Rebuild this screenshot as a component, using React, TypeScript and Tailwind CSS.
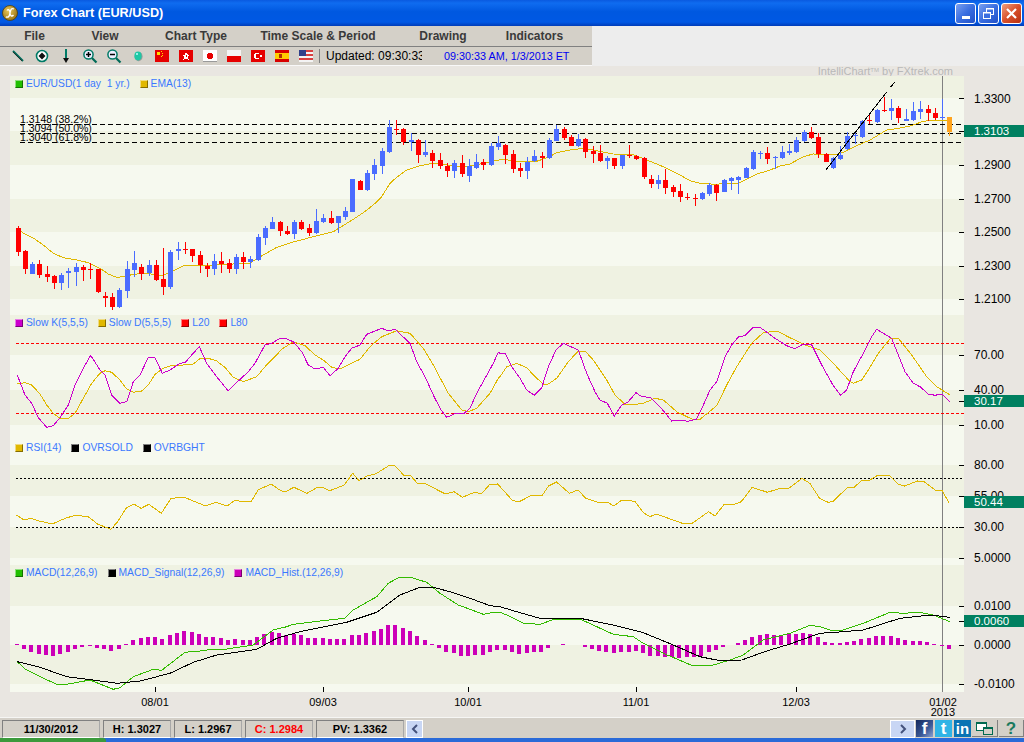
import React from "react";

type P = [number, number][];
const z = (l: P, ox: number, oy: number, sx = 3, sy = 3) =>
  l.map(([x, y]) => `${(ox + x / sx).toFixed(1)},${(oy + y / sy).toFixed(1)}`).join(" ");

const C: [number, number, number, number, number][] = [
  [378,384,455,468,0],[450,453,507,522,0],[486,492,522,522,1],[480,492,525,534,0],[498,522,531,546,0],[525,528,549,567,0],[519,525,549,570,1],[504,514,519,564,1],[489,501,516,558,1],[495,501,510,543,0],
  [489,507,510,537,0],[507,507,576,579,0],[576,588,593,621,0],[579,591,621,630,0],[564,570,621,624,1],[483,507,573,594,1],[453,489,510,531,1],[492,501,522,540,0],[480,495,519,528,1],[480,495,540,543,0],
  [444,537,561,585,0],[450,456,561,567,1],[426,447,453,480,1],[426,447,450,462,0],[447,447,468,486,0],[453,465,495,519,0],[489,498,507,531,0],[462,483,507,525,1],[456,483,492,519,0],[477,489,507,519,0],
  [462,471,507,522,1],[456,471,486,507,0],[468,477,486,504,1],[402,411,480,483,1],[378,384,414,435,1],[351,366,387,387,1],[363,366,393,408,0],[378,393,402,405,0],[360,366,402,417,1],[360,366,387,390,0],
  [372,384,399,408,0],[327,363,399,402,1],[342,354,366,369,1],[333,354,369,372,0],[348,348,369,399,1],
  [321,333,351,360,1],[237,237,336,336,1],[240,243,270,270,0],[210,219,270,273,1],[177,195,222,240,1],[144,153,198,222,1],[60,81,156,159,1],[60,87,90,105,0],[84,87,126,135,0],[100,120,126,153,1],
  [117,120,165,189,0],[120,156,165,171,1],[150,159,183,204,0],[159,180,198,207,0],[189,198,213,231,0],[180,189,213,234,1],[165,189,222,231,0],[177,198,228,246,1],[162,186,204,207,1],[177,186,195,210,0],
  [129,138,195,198,1],[108,129,141,150,1],[132,135,165,192,0],[150,162,207,219,0],[189,204,213,231,0],[171,186,213,237,1],[150,168,183,186,1],[156,168,174,204,0],[114,120,174,177,1],[75,87,123,123,1],
  [81,87,114,120,0],[105,111,138,138,0],[102,117,138,141,1],[114,117,156,174,0],[138,153,162,189,0],[135,159,183,186,0],[168,174,183,207,1],[174,174,198,207,0],[165,165,198,207,1],[135,165,168,174,0],
  [165,168,177,180,0],[171,174,231,237,0],[225,237,252,264,0],[225,240,252,267,1],[207,240,264,282,0],[255,261,276,291,0],[252,273,291,306,0],
];
const C2: [number, number, number, number, number][] = [
  [339,351,354,360,0],[342,354,357,378,0],[336,339,357,360,1],[309,315,342,348,1],[312,315,339,363,0],[297,300,336,336,1],[291,295,303,330,1],[288,291,300,342,1],[261,264,294,294,1],[210,216,267,270,1],
  [213,219,222,237,1],[201,219,237,252,0],[228,231,234,267,1],[198,216,234,237,1],[192,213,219,225,1],[171,180,216,219,1],[150,156,183,186,1],[141,156,174,177,0],[159,171,222,234,0],[219,222,246,246,0],
  [231,234,264,267,1],[198,225,237,240,1],[156,168,207,210,1],[156,165,168,192,1],[120,123,171,174,1],[105,120,123,132,0],[87,90,126,129,1],[51,90,93,96,0],[57,84,93,120,1],[78,84,114,129,0],
  [87,117,123,123,1],[66,93,120,123,1],[63,87,96,117,1],[75,87,99,123,0],[84,99,114,120,0],[57,111,114,120,1],[111,111,156,168,2],
];
const candles = [...C.map((c) => ({ c, oy: 100 })), ...C2.map((c) => ({ c, oy: 80 }))].map(({ c, oy }, i) => ({
  x: Math.round(17.5 + 7.28 * i),
  wt: Math.round(oy + c[0] / 3), bt: Math.round(oy + c[1] / 3), bb: Math.round(oy + c[2] / 3), wb: Math.round(oy + c[3] / 3),
  fill: ["#ff0000", "#4a6cff", "#ffa41e"][c[4]],
}));

const ema = [
  z([[52,384],[70,400],[100,414],[130,435],[160,460],[190,473],[232,480],[265,488],[300,505],[325,522],[350,532],[372,530],[400,523],[440,520],[487,527],[515,515],[550,498],[575,495],[650,495],[750,489],[790,465],[830,442],[880,426],[940,410],[1000,395]], 0, 100),
  z([[40,358],[70,338],[100,315],[125,290],[150,250],[170,232],[200,210],[240,197],[280,190],[320,195],[360,200],[400,197],[450,185],[490,178],[530,184],[590,184],[625,172],[650,158],[690,150],[720,146],[760,150],[820,162],[880,164],[920,180],[970,200],[1020,225]], 340, 100),
  z([[0,285],[30,302],[60,310],[105,313],[150,310],[175,310],[200,298],[230,282],[265,272],[300,258],[330,252],[370,230],[400,222],[470,225],[500,212],[530,197],[570,180],[620,150],[650,146],[690,138],[730,124],[770,120],[800,123]], 680, 80),
].join(" ");

const kLine = [
  z([[52,180],[75,240],[95,265],[115,308],[140,337],[160,332],[180,308],[205,270],[225,210],[250,160],[272,121],[300,165],[315,180],[335,240],[360,265],[380,260],[400,200],[420,180],[445,127],[465,128],[487,175],[510,165],[540,145],[555,143],[575,120],[598,95],[620,145],[650,185],[685,228],[715,198],[745,170],[765,145],[795,90],[815,85],[840,70],[860,72],[880,80],[905,110],[925,150],[945,162],[970,157],[990,182],[1015,160],[1035,125],[1055,100],[1080,90],[1100,58],[1120,50],[1145,40],[1165,48],[1185,43],[1230,85],[1250,140],[1275,185],[1300,240],[1320,280],[1340,307],[1365,296],[1390,297],[1410,280],[1430,235],[1455,190],[1480,145],[1495,112]], 0, 315),
  z([[0,115],[15,115],[35,155],[60,190],[80,225],[103,241],[125,218],[145,155],[168,105],[190,85],[235,105],[260,175],[285,230],[300,255],[322,265],[343,303],[365,270],[385,260],[408,233],[425,245],[450,247],[480,275],[515,318],[540,316],[565,319],[590,312],[610,270],[630,225],[650,200],[675,125],[695,90],[715,66],[735,62],[760,37],[780,37],[825,70],[860,92],[885,101],[910,87],[935,90],[965,150],[1000,212],[1022,241],[1040,225],[1060,170],[1090,115],[1115,65],[1130,43],[1175,70],[1195,120],[1215,170],[1240,205],[1260,215],[1285,237],[1305,241],[1325,237],[1350,260]], 500, 315),
].join(" ");
const dLine = [
  z([[52,207],[75,203],[95,210],[120,237],[140,270],[160,295],[180,310],[205,310],[225,295],[250,250],[275,205],[300,175],[315,167],[335,172],[360,195],[380,222],[400,232],[425,228],[445,210],[465,178],[490,160],[520,150],[550,150],[580,147],[600,131],[625,130],[650,138],[675,157],[700,187],[730,200],[770,185],[795,155],[825,125],[845,103],[880,80],[915,92],[945,120],[970,135],[995,157],[1020,162],[1050,147],[1080,133],[1110,95],[1145,65],[1190,47],[1230,55],[1270,100],[1300,150],[1345,235],[1385,285],[1405,290],[1430,280],[1470,235],[1495,190]], 0, 315),
  z([[0,185],[20,155],[50,145],[80,158],[105,185],[130,207],[145,207],[170,190],[205,140],[235,108],[255,108],[280,135],[320,195],[345,240],[375,268],[390,270],[430,265],[465,250],[490,255],[530,290],[575,312],[600,313],[650,272],[680,210],[710,155],[755,85],[790,53],[830,48],[870,68],[910,88],[960,105],[1000,145],[1050,200],[1060,205],[1085,195],[1105,165],[1135,115],[1170,72],[1195,70],[1235,120],[1280,185],[1310,215],[1350,240]], 500, 315),
].join(" ");

const rsi = z([[25,225],[37,240],[48,235],[60,243],[80,252],[100,235],[115,226],[135,230],[150,253],[170,268],[180,245],[193,205],[205,192],[216,205],[228,193],[247,220],[262,175],[282,172],[315,198],[330,187],[348,198],[360,180],[372,186],[385,184],[395,150],[415,132],[430,152],[437,155],[450,142],[470,160],[485,143],[495,143],[505,152],[527,135],[540,100],[550,122],[562,108],[575,102],[597,75],[605,78],[618,105],[628,105],[640,132],[650,130],[682,162],[695,155],[708,172],[725,158],[738,160],[750,133],[762,132],[785,182],[795,185],[815,165],[830,167],[840,138],[852,126],[872,160],[885,150],[897,175],[918,188],[930,186],[940,198],[952,180],[972,184],[985,218],[995,230],[1005,222],[1045,250],[1060,250],[1085,215],[1095,228],[1108,195],[1125,193],[1135,185],[1152,142],[1175,157],[1195,145],[1208,145],[1228,115],[1240,130],[1255,175],[1268,187],[1275,185],[1298,142],[1308,142],[1320,120],[1332,120],[1342,108],[1362,106],[1375,132],[1385,138],[1405,123],[1415,125],[1432,150],[1442,150],[1453,187]], 0, 440, 1.53125, 3);

const mGreen = [
  z([[52,290],[75,312],[120,335],[175,360],[200,358],[270,345],[340,373],[360,368],[400,335],[460,313],[485,316],[555,262],[610,257],[640,252],[680,252],[760,240],[820,195],[860,185],[880,178],[960,168],[1035,160],[1060,135],[1130,95],[1165,55],[1195,38],[1235,38],[1280,52],[1320,85],[1375,120],[1410,133],[1450,148],[1480,142]], 0, 565),
  z([[0,142],[20,150],[70,175],[120,178],[165,162],[240,162],[340,208],[400,215],[430,235],[490,265],[580,303],[640,300],[690,285],[730,270],[790,225],[870,205],[930,181],[960,185],[1000,198],[1030,195],[1090,175],[1170,142],[1210,145],[1260,142],[1300,150],[1350,170]], 500, 565),
].join(" ");
const mBlack = [
  z([[52,290],[120,307],[200,335],[280,345],[350,355],[420,348],[510,325],[580,292],[650,270],[770,253],[830,220],[900,200],[970,186],[1040,172],[1130,142],[1200,90],[1260,67],[1300,67],[1350,80],[1410,100],[1470,122]], 0, 565),
  z([[0,125],[60,143],[120,160],[240,160],[340,180],[430,203],[520,240],[600,275],[660,287],[725,285],[800,258],[870,237],[960,205],[1030,200],[1090,195],[1200,160],[1290,150],[1350,157]], 500, 565),
].join(" ");

const H1: P = [[52,3],[72,-12],[93,-21],[117,-27],[138,-30],[159,-33],[180,-27],[204,-21],[225,-12],[246,-6],[270,-4],[291,-9],[312,-12],[333,-18],[357,-12],[378,3],[399,15],[423,22],[444,24],[465,24],[486,18],[510,30],[531,36],[552,41],[576,39],[597,33],[618,24],[639,24],[663,21],[684,15],[705,18],[729,15],[750,15],[771,24],[792,33],[816,39],[837,36],[858,31],[882,33],[903,30],[924,21],[945,21],[969,21],[990,18],[1011,18],[1032,18],[1056,30],[1077,30],[1098,36],[1122,42],[1143,48],[1164,60],[1185,60],[1209,51],[1230,42],[1251,27],[1275,15],[1296,3],[1317,-9],[1338,-21],[1362,-24],[1383,-33],[1404,-33],[1425,-30],[1449,-30],[1470,-21],[1491,-15]];
const H2: P = [[15,-15],[36,-21],[57,-27],[81,-23],[102,-21],[123,-21],[144,-9],[189,3],[255,-6],[276,-12],[297,-18],[318,-21],[342,-23],[363,-21],[387,-21],[408,-18],[429,-24],[450,-33],[474,-33],[495,-36],[516,-36],[537,-39],[561,-36],[582,-36],[603,-33],[627,-21],[648,-15],[669,-6],[714,6],[735,15],[756,24],[780,30],[801,33],[822,30],[843,30],[867,33],[888,33],[909,36],[930,33],[954,24],[975,9],[996,6],[1020,6],[1041,9],[1062,12],[1083,18],[1107,21],[1128,27],[1149,27],[1173,27],[1194,21],[1215,15],[1239,12],[1260,12],[1281,9],[1302,3],[1326,-3],[1347,-12]];
const hist = [...H1.map(([x, v]) => ({ x: x / 3, v })), ...H2.map(([x, v]) => ({ x: 500 + x / 3, v }))];

const dark = "bg-[#eff2e2]";
const light = "bg-[#f6f9ef]";
const txt = "font-['Liberation_Sans',Arial,sans-serif]";

function Swatch({ c }: { c: string }) {
  return <span className={`block h-[8px] w-[8px] border border-t-white/50 border-l-white/50 border-r-black/40 border-b-black/40 ${c}`} />;
}
function Legend({ items }: { items: [string, string][] }) {
  return (
    <div className="absolute left-[5px] top-[1px] z-10 flex h-[13px] items-center gap-[10px]">
      {items.map(([c, t]) => (
        <div key={t} className="flex items-center gap-[3px]">
          <Swatch c={c} />
          <span className="whitespace-pre text-[10.3px] leading-[13px] text-[#3a78ff]">{t}</span>
        </div>
      ))}
    </div>
  );
}
function AxisLabel({ top, t }: { top: string; t: string }) {
  return <div className={`absolute left-[10px] h-[14px] text-[12px] leading-[14px] text-black ${top}`}>{t}</div>;
}
function Box({ top, t }: { top: string; t: string }) {
  return <div className={`absolute left-0 h-[12px] w-[60px] bg-[#008060] pl-[10px] text-[11.5px] leading-[12px] text-white ${top}`}>{t}</div>;
}
function Overlay({ top, h, ticks, children }: { top: number; h: number; ticks: number[]; children: React.ReactNode }) {
  return (
    <svg className="absolute inset-0 h-full w-full" viewBox={`10 ${top} 954 ${h}`} shapeRendering="crispEdges" fill="none">
      <line x1={942.5} x2={942.5} y1={top} y2={top + h} stroke="#808080" />
      {children}
      {ticks.map((y) => (
        <line key={y} x1={959} x2={964} y1={y + 0.5} y2={y + 0.5} stroke="#000" />
      ))}
    </svg>
  );
}

function Flag({ children }: { children: React.ReactNode }) {
  return (
    <svg width="14" height="12" viewBox="0 0 14 12" shapeRendering="crispEdges">
      {children}
    </svg>
  );
}
const tools: React.ReactNode[] = [
  <svg key="a" width="16" height="16" viewBox="0 0 16 16"><path d="M3 3L13 13" stroke="#006a58" strokeWidth="2" /><path d="M3 4L12 13" stroke="#222" strokeWidth="0.8" /></svg>,
  <svg key="b" width="16" height="16" viewBox="0 0 16 16"><circle cx="8" cy="8" r="5.5" fill="#fff" stroke="#007a66" strokeWidth="1.6" /><path d="M8 4.5L11.5 8L8 11.5L4.5 8Z" fill="#111" /></svg>,
  <svg key="c" width="16" height="16" viewBox="0 0 16 16"><rect x="7" y="1" width="2" height="10" fill="#007a66" /><path d="M5 10H11L8 15Z" fill="#111" /></svg>,
  <svg key="d" width="16" height="16" viewBox="0 0 16 16"><circle cx="6.5" cy="6.5" r="4.6" fill="#eef" stroke="#007a66" strokeWidth="1.5" /><path d="M4 6.5H9M6.5 4V9" stroke="#000" strokeWidth="1.5" /><path d="M10 10L14.5 14.5" stroke="#006a58" strokeWidth="2.2" /></svg>,
  <svg key="e" width="16" height="16" viewBox="0 0 16 16"><circle cx="6.5" cy="6.5" r="4.6" fill="#eef" stroke="#007a66" strokeWidth="1.5" /><path d="M4 6.5H9" stroke="#000" strokeWidth="1.5" /><path d="M10 10L14.5 14.5" stroke="#006a58" strokeWidth="2.2" /></svg>,
  <svg key="f" width="16" height="16" viewBox="0 0 16 16"><ellipse cx="8.6" cy="8.6" rx="4" ry="4.6" fill="#999" /><ellipse cx="8" cy="8" rx="3.6" ry="4.4" fill="#1ec8a4" /><circle cx="7" cy="6" r="1" fill="#bff" /></svg>,
  <Flag key="cn"><rect width="14" height="12" fill="#e60000" /><rect x="2" y="2" width="3" height="3" fill="#ffdd00" /><rect x="6" y="1" width="1" height="1" fill="#ffdd00" /><rect x="7" y="3" width="1" height="1" fill="#ffdd00" /><rect x="7" y="5" width="1" height="1" fill="#ffdd00" /><rect x="6" y="6" width="1" height="1" fill="#ffdd00" /></Flag>,
  <Flag key="hk"><rect width="14" height="12" fill="#e60000" /><path d="M7 2.5L8.5 4.5L10.5 5L9 7L9.5 9.5L7 8.5L4.5 9.5L5 7L3.5 5L5.5 4.5Z" fill="#fff" /><rect x="6.5" y="5" width="1" height="2" fill="#e60000" /></Flag>,
  <Flag key="jp"><rect width="14" height="12" fill="#fff" /><rect y="11" width="14" height="1" fill="#999" /><circle cx="7" cy="6" r="3" fill="#e60000" /></Flag>,
  <Flag key="pl"><rect width="14" height="6" fill="#f4f4f4" /><rect y="6" width="14" height="6" fill="#e60000" /></Flag>,
  <Flag key="tr"><rect width="14" height="12" fill="#e60000" /><circle cx="6" cy="6" r="3" fill="#fff" /><circle cx="7" cy="6" r="2.3" fill="#e60000" /><rect x="9" y="5" width="2" height="2" fill="#fff" /></Flag>,
  <Flag key="es"><rect width="14" height="12" fill="#d80000" /><rect y="3" width="14" height="6" fill="#ffcc00" /><rect x="4" y="4" width="3" height="4" fill="#b03000" /></Flag>,
  <Flag key="us"><rect width="14" height="12" fill="#f4f4f4" /><rect width="14" height="2" fill="#d84040" /><rect y="4" width="14" height="2" fill="#d84040" /><rect y="8" width="14" height="2" fill="#d84040" /><rect width="7" height="6" fill="#30408a" /></Flag>,
];

function WinBtn({ red, children }: { red?: boolean; children: React.ReactNode }) {
  return (
    <button className={`flex h-[21px] w-[21px] items-center justify-center rounded-[3px] border border-white ${red ? "bg-[linear-gradient(135deg,#f0a080,#d8502a_50%,#b83010)]" : "bg-[linear-gradient(135deg,#7aa0f0,#3a6ee0_50%,#2050c8)]"}`}>
      {children}
    </button>
  );
}
function Cell({ w, red, t }: { w: string; red?: boolean; t: string }) {
  return (
    <div className={`flex h-[18px] items-center justify-center border border-t-[#808080] border-l-[#808080] border-r-[#a8a8a8] border-b-white bg-[#d4d0c8] text-[11px] font-bold ${w} ${red ? "text-[#ff0000]" : "text-black"}`}>
      {t}
    </div>
  );
}
function Scroll({ w, dir }: { w: string; dir: "l" | "r" }) {
  return (
    <button className={`flex h-[18px] items-center justify-center border border-white bg-[#c8d6f4] ${w}`}>
      <svg width="8" height="10" viewBox="0 0 8 10"><path d={dir === "l" ? "M6 1L2 5L6 9" : "M2 1L6 5L2 9"} stroke="#44527c" strokeWidth="2" fill="none" /></svg>
    </button>
  );
}
function DateLabel({ left, t }: { left: string; t: string }) {
  return <div className={`absolute top-[3px] h-[14px] -translate-x-1/2 text-[11px] leading-[14px] text-black ${left}`}>{t}</div>;
}

export default function App() {
  return (
    <div className={`flex h-[742px] w-[1024px] flex-col overflow-hidden bg-[#e9e6e1] ${txt}`}>
      {/* title bar */}
      <div className="flex h-[26px] shrink-0 items-center bg-[linear-gradient(180deg,#0a5ae0_0%,#0f6cf0_12%,#0058e0_45%,#0058e4_85%,#003cb8_100%)] pl-[2px] pr-[2px]">
        <svg width="16" height="16" viewBox="0 0 16 16">
          <defs>
            <radialGradient id="g" cx="0.4" cy="0.35" r="0.8"><stop offset="0" stopColor="#e8c85a" /><stop offset="1" stopColor="#8a6408" /></radialGradient>
          </defs>
          <circle cx="8" cy="8" r="7.5" fill="url(#g)" stroke="#4a3c10" strokeWidth="0.8" />
          <path d="M12 4C9 2.6 8.6 5 8 8C7.4 11 6.6 13 3.8 11.8M5 5.5C6 4 8 4.5 8 8C8 11 10 11.8 11.5 10" stroke="#fff" strokeWidth="1.3" fill="none" />
        </svg>
        <span className="ml-[5px] text-[12.7px] font-bold leading-[26px] text-white">Forex Chart (EUR/USD)</span>
        <div className="ml-auto flex gap-[2px]">
          <WinBtn><span className="mt-[9px] block h-[3px] w-[8px] bg-white" /></WinBtn>
          <WinBtn>
            <svg width="13" height="13" viewBox="0 0 13 13" fill="none" stroke="#fff"><rect x="4.5" y="1.5" width="7" height="6" /><rect x="1.5" y="5.5" width="7" height="6" fill="#3a6ee0" /><path d="M4.5 2H11.5M1.5 6H8.5" /></svg>
          </WinBtn>
          <WinBtn red>
            <svg width="13" height="13" viewBox="0 0 13 13"><path d="M2 2L11 11M11 2L2 11" stroke="#fff" strokeWidth="2.2" /></svg>
          </WinBtn>
        </div>
      </div>

      {/* menu + toolbar */}
      <div className="flex h-[40px] shrink-0 bg-[#ededed]">
        <div className="flex w-[592px] flex-col bg-[#d4d0c8]">
          <div className="flex h-[21px] items-center border-b border-[#808080] text-[12px] font-bold text-[#3a3a3a]">
            {([["w-[69px]", "File"], ["w-[72px]", "View"], ["w-[110px]", "Chart Type"], ["w-[134px]", "Time Scale & Period"], ["w-[116px]", "Drawing"], ["w-[67px]", "Indicators"]] as const).map(([w, t]) => (
              <div key={t} className={`text-center ${w}`}>{t}</div>
            ))}
          </div>
          <div className="flex h-[18px] items-center pl-[6px]">
            {tools.map((t, i) => (
              <div key={i} className="flex w-[24px] items-center justify-center">{t}</div>
            ))}
            <div className="ml-[1px] h-[14px] w-px bg-[#808080]" />
            <div className="ml-[6px] w-[96px] overflow-hidden whitespace-nowrap text-[12px] leading-[14px] text-black">Updated: 09:30:33</div>
            <div className="ml-[22px] whitespace-nowrap text-[10.8px] text-[#0000f0]">09:30:33 AM, 1/3/2013 ET</div>
          </div>
          <div className="h-[1px] bg-[#f8f8f8]" />
        </div>
      </div>

      {/* watermark */}
      <div className="flex h-[10px] shrink-0 justify-end pr-[71px] text-[11px] leading-[10px] text-[#b8b8b8]">
        <span className="whitespace-nowrap">IntelliChart<sup className="text-[6px]">TM</sup> by FXtrek.com</span>
      </div>

      {/* chart panels */}
      <div className="flex shrink-0 flex-col pl-[10px]">
        {/* main */}
        <div className="flex h-[239px]">
          <div className="relative w-[954px]">
            {["h-[22px] " + dark, "h-[33px] " + light, "h-[34px] " + dark, "h-[34px] " + light, "h-[33px] " + dark, "h-[34px] " + light, "h-[33px] " + dark, "h-[16px] " + light].map((b, i) => (
              <div key={i} className={b} />
            ))}
            <Overlay top={76} h={239} ticks={[98, 131, 165, 199, 232, 266, 299]}>
              {[124.5, 133.5, 142.5].map((y) => (
                <line key={y} x1={20} x2={964} y1={y} y2={y} stroke="#000" strokeDasharray="5 3" />
              ))}
              <polyline points={ema} stroke="#e0b800" />
              {candles.map((k, i) => (
                <g key={i}>
                  <rect x={k.x} y={k.wt} width={1} height={Math.max(1, k.wb - k.wt)} fill={k.fill} />
                  <rect x={k.x - 2} y={k.bt} width={5} height={Math.max(1, k.bb - k.bt)} fill={k.fill} />
                </g>
              ))}
              <polyline points="825.5,170.5 886.7,92" stroke="#000" />
              <polyline points="890.5,87 895,82" stroke="#000" />
            </Overlay>
            <Legend items={[["bg-[#22c000]", "EUR/USD(1 day  1 yr.)"], ["bg-[#e0b800]", "EMA(13)"]]} />
            <div className="absolute left-[10px] top-[38px] text-[10.5px] leading-[11px] text-black">1.3148 (38.2%)</div>
            <div className="absolute left-[10px] top-[47px] text-[10.5px] leading-[11px] text-black">1.3094 (50.0%)</div>
            <div className="absolute left-[10px] top-[56px] text-[10.5px] leading-[11px] text-black">1.3040 (61.8%)</div>
          </div>
          <div className="relative w-[60px]">
            <AxisLabel top="top-[16px]" t="1.3300" />
            <AxisLabel top="top-[82px]" t="1.2900" />
            <AxisLabel top="top-[116px]" t="1.2700" />
            <AxisLabel top="top-[149px]" t="1.2500" />
            <AxisLabel top="top-[183px]" t="1.2300" />
            <AxisLabel top="top-[216px]" t="1.2100" />
            <Box top="top-[49px]" t="1.3103" />
          </div>
        </div>

        {/* stochastic */}
        <div className="flex h-[125px]">
          <div className="relative w-[954px]">
            {["h-[40px] " + dark, "h-[35px] " + light, "h-[35px] " + dark, "h-[15px] " + light].map((b, i) => (
              <div key={i} className={b} />
            ))}
            <Overlay top={315} h={125} ticks={[355, 390, 425, 401]}>
              <line x1={16} x2={964} y1={343.5} y2={343.5} stroke="#ff0000" strokeDasharray="3 2" />
              <line x1={16} x2={964} y1={413.5} y2={413.5} stroke="#ff0000" strokeDasharray="3 2" />
              <polyline points={dLine} stroke="#e0b800" />
              <polyline points={kLine} stroke="#cc00cc" />
            </Overlay>
            <Legend items={[["bg-[#cc00cc]", "Slow K(5,5,5)"], ["bg-[#e0b800]", "Slow D(5,5,5)"], ["bg-[#ff0000]", "L20"], ["bg-[#ff0000]", "L80"]]} />
          </div>
          <div className="relative w-[60px]">
            <AxisLabel top="top-[33px]" t="70.00" />
            <AxisLabel top="top-[68px]" t="40.00" />
            <AxisLabel top="top-[103px]" t="10.00" />
            <Box top="top-[80px]" t="30.17" />
          </div>
        </div>

        {/* RSI */}
        <div className="flex h-[125px]">
          <div className="relative w-[954px]">
            {["h-[25px] " + light, "h-[31px] " + dark, "h-[31px] " + light, "h-[31px] " + dark, "h-[7px] " + light].map((b, i) => (
              <div key={i} className={b} />
            ))}
            <Overlay top={440} h={125} ticks={[465, 496, 527, 558]}>
              <line x1={16} x2={964} y1={478.5} y2={478.5} stroke="#000" strokeDasharray="2 2" />
              <line x1={16} x2={964} y1={527.5} y2={527.5} stroke="#000" strokeDasharray="2 2" />
              <polyline points={rsi} stroke="#e0b800" />
            </Overlay>
            <Legend items={[["bg-[#e0b800]", "RSI(14)"], ["bg-black", "OVRSOLD"], ["bg-black", "OVRBGHT"]]} />
          </div>
          <div className="relative w-[60px]">
            <AxisLabel top="top-[18px]" t="80.00" />
            <AxisLabel top="top-[49px]" t="55.00" />
            <AxisLabel top="top-[80px]" t="30.00" />
            <AxisLabel top="top-[111px]" t="5.0000" />
            <Box top="top-[56px]" t="50.44" />
          </div>
        </div>

        {/* MACD */}
        <div className="flex h-[127px]">
          <div className="relative w-[954px]">
            {["h-[41px] " + dark, "h-[39px] " + light, "h-[39px] " + dark, "h-[8px] " + light].map((b, i) => (
              <div key={i} className={b} />
            ))}
            <Overlay top={565} h={127} ticks={[606, 621, 645, 684]}>
              {hist.map((b, i) => {
                const abs = Math.abs(b.v) / 3;
                return <rect key={i} x={Math.round(b.x) - 2} y={b.v > 0 ? 645 - abs : 645} width={4} height={Math.max(1, abs)} fill="#cc00b8" />;
              })}
              <polyline points={mGreen} stroke="#33bb00" />
              <polyline points={mBlack} stroke="#000" />
              {[155.5, 323.5, 468.5, 636.5, 796.5].map((x) => (
                <line key={x} x1={x} x2={x} y1={687} y2={692} stroke="#000" />
              ))}
            </Overlay>
            <Legend items={[["bg-[#22c000]", "MACD(12,26,9)"], ["bg-black", "MACD_Signal(12,26,9)"], ["bg-[#cc00b8]", "MACD_Hist.(12,26,9)"]]} />
          </div>
          <div className="relative w-[60px]">
            <AxisLabel top="top-[34px]" t="0.0100" />
            <AxisLabel top="top-[73px]" t="0.0000" />
            <AxisLabel top="top-[112px]" t="-0.0100" />
            <Box top="top-[50px]" t="0.0060" />
          </div>
        </div>
      </div>

      {/* date axis */}
      <div className="relative h-[25px] shrink-0">
        <DateLabel left="left-[155px]" t="08/01" />
        <DateLabel left="left-[323px]" t="09/03" />
        <DateLabel left="left-[468px]" t="10/01" />
        <DateLabel left="left-[636px]" t="11/01" />
        <DateLabel left="left-[796px]" t="12/03" />
        <div className="absolute left-[943px] top-[3px] -translate-x-1/2 text-center text-[11px] text-black">
          <div className="h-[10px] leading-[14px]">01/02</div>
          <div className="leading-[14px]">2013</div>
        </div>
      </div>

      {/* status bar */}
      <div className="flex h-[21px] shrink-0 items-start gap-[3px] border-t border-[#f6f6f4] bg-[#d4d0c8] pl-[2px] pt-[2px]">
        <Cell w="w-[98px]" t="11/30/2012" />
        <Cell w="w-[68px]" t="H: 1.3027" />
        <Cell w="w-[68px]" t="L: 1.2967" />
        <Cell w="w-[68px]" t="C: 1.2984" red />
        <Cell w="w-[88px]" t="PV: 1.3362" />
        <Scroll w="w-[17px] -ml-[1px]" dir="l" />
        <div className="ml-auto flex items-start gap-[1px]">
          <Scroll w="w-[25px]" dir="r" />
          <div className="flex h-[17px] w-[17px] items-end justify-center bg-[linear-gradient(135deg,#14295c,#3b5998_60%,#8aa0d0)] text-[17px] font-bold leading-[17px] text-white">f</div>
          <div className="ml-[1px] flex h-[17px] w-[17px] items-center justify-center bg-[#2fb4e6] text-[17px] font-bold leading-[17px] text-white">t</div>
          <div className="ml-[1px] flex h-[17px] w-[17px] items-center justify-center bg-[#0a74b4] text-[15px] font-bold leading-[17px] text-white">in</div>
          <div className="flex h-[17px] w-[26px] items-center justify-center border-r border-b border-[#808080]">
            <svg width="17" height="13" viewBox="0 0 17 13" shapeRendering="crispEdges"><rect x="0" y="0" width="11" height="9" fill="#006a50" /><rect x="1" y="2" width="9" height="6" fill="#fff" /><rect x="7" y="5" width="10" height="8" fill="#006a50" /><rect x="8" y="7" width="8" height="5" fill="#d4d0c8" /></svg>
          </div>
          <div className="flex h-[17px] w-[25px] items-center justify-center border-r border-b border-[#808080] text-[17px] font-bold leading-[17px] text-[#1a7a5e]">?</div>
        </div>
      </div>

      {/* taskbar strip */}
      <div className="flex h-[4px] shrink-0 bg-[#2a6ad8]">
        <div className="w-[106px] rounded-tr-[3px] bg-[#3c9a3c]" />
      </div>
    </div>
  );
}
